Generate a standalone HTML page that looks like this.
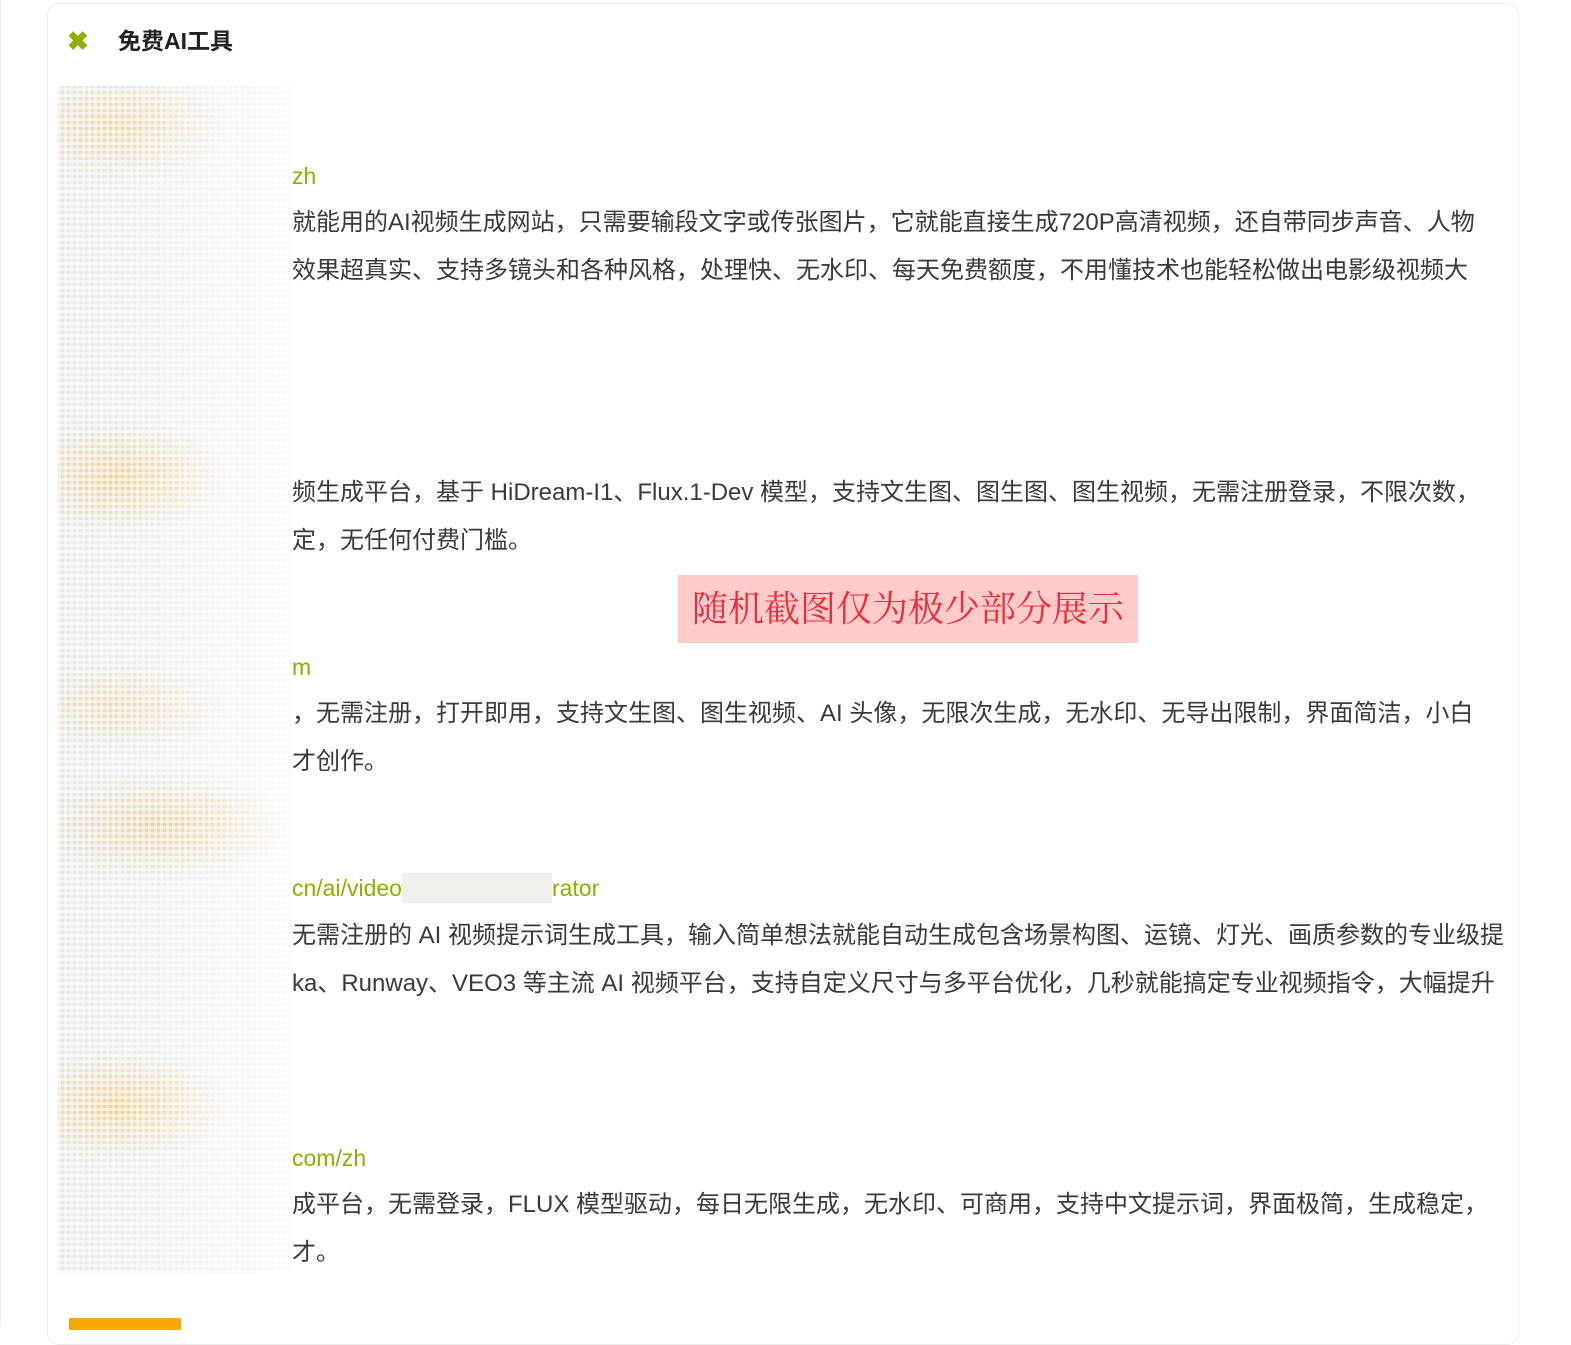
<!DOCTYPE html>
<html><head><meta charset="utf-8"><style>
body{margin:0;width:1571px;height:1327px;background:#fff;position:relative;overflow:hidden;font-family:"Liberation Sans","Noto Sans CJK SC",sans-serif;}
.outer{position:absolute;left:0;top:0;width:1px;height:1327px;background:#eee}
.card{position:absolute;left:47px;top:3px;width:1470px;height:1340px;border:1px solid #ececec;border-radius:12px;background:#fff}
.t{position:absolute;left:292px;font-size:24px;color:#3a3a3a;white-space:nowrap;line-height:30px}
.l{position:absolute;left:292px;font-size:23px;color:#8db000;white-space:nowrap;line-height:30px}
.blur{position:absolute;left:58px;top:86px;width:234px;height:1187px;
background:
repeating-linear-gradient(0deg,rgba(255,255,255,.5) 0 3px,rgba(255,255,255,0) 3px 6px),
repeating-linear-gradient(90deg,rgba(255,255,255,.45) 0 3px,rgba(255,255,255,0) 3px 6px),
radial-gradient(ellipse 110px 60px at 60px 40px,rgba(240,200,120,.55),transparent),
radial-gradient(ellipse 110px 60px at 60px 390px,rgba(240,195,100,.6),transparent),
radial-gradient(ellipse 110px 50px at 60px 620px,rgba(240,200,120,.45),transparent),
radial-gradient(ellipse 130px 60px at 100px 740px,rgba(230,190,110,.55),transparent),
radial-gradient(ellipse 110px 60px at 60px 1020px,rgba(240,195,100,.6),transparent),
linear-gradient(90deg,#e6e8ec,#f3f4f6 70%,#fafafa);}
</style></head><body>
<div class="outer"></div>
<div class="card"></div>
<div style="position:absolute;left:67px;top:26px;color:#8db000;font-size:26px;font-weight:bold;line-height:30px">✖</div>
<div style="position:absolute;left:118px;top:26px;font-size:23px;font-weight:bold;color:#222;line-height:30px">免费AI工具</div>
<div class="blur"></div>
<div class="l" style="top:161px">zh</div>
<div class="t" style="top:208px">就能用的AI视频生成网站，只需要输段文字或传张图片，它就能直接生成720P高清视频，还自带同步声音、人物</div>
<div class="t" style="top:256px">效果超真实、支持多镜头和各种风格，处理快、无水印、每天免费额度，不用懂技术也能轻松做出电影级视频大</div>
<div class="t" style="top:478px">频生成平台，基于 HiDream-I1、Flux.1-Dev 模型，支持文生图、图生图、图生视频，无需注册登录，不限次数，</div>
<div class="t" style="top:526px">定，无任何付费门槛。</div>
<div style="position:absolute;left:678px;top:575px;width:460px;height:68px;background:#ffcaca;color:#e8303a;font-family:'Liberation Serif','Noto Serif CJK SC',serif;font-size:36px;line-height:68px;text-align:center">随机截图仅为极少部分展示</div>
<div class="l" style="top:652px">m</div>
<div class="t" style="top:699px">，无需注册，打开即用，支持文生图、图生视频、AI 头像，无限次生成，无水印、无导出限制，界面简洁，小白</div>
<div class="t" style="top:747px">才创作。</div>
<div class="l" style="top:873px">cn/ai/video<span style="display:inline-block;width:150px;height:30px;background:#f0f0ec;vertical-align:top"></span>rator</div>
<div class="t" style="top:921px">无需注册的 AI 视频提示词生成工具，输入简单想法就能自动生成包含场景构图、运镜、灯光、画质参数的专业级提</div>
<div class="t" style="top:969px">ka、Runway、VEO3 等主流 AI 视频平台，支持自定义尺寸与多平台优化，几秒就能搞定专业视频指令，大幅提升</div>
<div class="l" style="top:1143px">com/zh</div>
<div class="t" style="top:1190px">成平台，无需登录，FLUX 模型驱动，每日无限生成，无水印、可商用，支持中文提示词，界面极简，生成稳定，</div>
<div class="t" style="top:1238px">才。</div>
<div style="position:absolute;left:69px;top:1318px;width:112px;height:12px;background:#f5a800"></div>
</body></html>
